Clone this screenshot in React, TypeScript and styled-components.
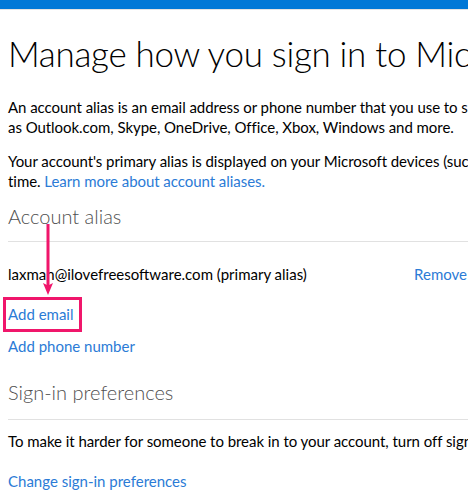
import styled, { createGlobalStyle } from "styled-components";

const GlobalStyle = createGlobalStyle`
  html, body {
    margin: 0;
    padding: 0;
    background: #fff;
    overflow: hidden;
  }
  body {
    font-family: "Segoe UI", Lato, "Liberation Sans", sans-serif;
    color: #000;
  }
`;

const TopBar = styled.div`
  height: 9px;
  background: #0078d7;
  border-bottom: 1px solid #e3e3e3;
`;

const Page = styled.main`
  width: 980px;
  padding: 0 8px;
`;

const Title = styled.h1`
  margin: 21px 0 0;
  font-size: 35px;
  line-height: 44px;
  font-weight: 300;
  letter-spacing: -0.3px;
  color: #000;
  white-space: nowrap;
`;

const Para = styled.p<{ $gap: number }>`
  margin: ${(p) => p.$gap}px 0 0;
  font-size: 15px;
  line-height: 20px;
  letter-spacing: -0.05px;
  white-space: nowrap;
`;

const Link = styled.a`
  color: #2b7bd6;
  text-decoration: none;
  font-size: 15px;
  line-height: 20px;
`;

const SectionTitle = styled.h2<{ $gap: number }>`
  margin: ${(p) => p.$gap}px 0 0;
  font-size: 20px;
  line-height: 28px;
  font-weight: 300;
  color: #505050;
`;

const Divider = styled.hr<{ $gap: number }>`
  margin: ${(p) => p.$gap}px 0 0;
  border: 0;
  border-top: 1px solid #e1e1e1;
  height: 0;
`;

const AliasRow = styled.div`
  width: 459px;
  margin-top: 22px;
  display: flex;
  justify-content: space-between;
  font-size: 15px;
  line-height: 20px;
`;

const ActionRow = styled.div<{ $gap: number }>`
  margin-top: ${(p) => p.$gap}px;
  line-height: 20px;
`;

const Highlight = styled.span`
  position: relative;
  display: inline-block;
`;

const Box = styled.span`
  position: absolute;
  top: -7px;
  left: -5px;
  right: -9px;
  bottom: -8px;
  border: 3px solid #f0166b;
  pointer-events: none;
`;

const Arrow = styled.svg`
  position: absolute;
  left: 35px;
  top: -80px;
  overflow: visible;
`;

export default function App() {
  return (
    <>
      <GlobalStyle />
      <TopBar />
      <Page>
        <Title>Manage how you sign in to Microsoft</Title>
        <Para $gap={22}>
          An account alias is an email address or phone number that you use to sign in to Microsoft services such
          <br />
          as Outlook.com, Skype, OneDrive, Office, Xbox, Windows and more.
        </Para>
        <Para $gap={14}>
          Your account's primary alias is displayed on your Microsoft devices (such as a Windows 10 PC, Xbox, or
          Windows Phone). You can change your primary alias at any
          <br />
          time. <Link href="#">Learn more about account aliases.</Link>
        </Para>

        <SectionTitle $gap={11}>Account alias</SectionTitle>
        <Divider $gap={11} />
        <AliasRow>
          <span>laxman@ilovefreesoftware.com (primary alias)</span>
          <Link href="#">Remove</Link>
        </AliasRow>
        <ActionRow $gap={20}>
          <Highlight>
            <Link href="#">Add email</Link>
            <Box />
            <Arrow width="12" height="71" viewBox="0 0 12 71">
              <rect x="3.5" y="0" width="3" height="62" fill="#f0166b" />
              <path d="M5 71 L0 59 L5 61.5 L10 59 Z" fill="#f0166b" />
            </Arrow>
          </Highlight>
        </ActionRow>
        <ActionRow $gap={12}>
          <Link href="#">Add phone number</Link>
        </ActionRow>

        <SectionTitle $gap={22}>Sign-in preferences</SectionTitle>
        <Divider $gap={13} />
        <Para $gap={11}>
          To make it harder for someone to break in to your account, turn off sign-in preferences for any email address
          or phone number you don't use.
        </Para>
        <ActionRow $gap={20}>
          <Link href="#">Change sign-in preferences</Link>
        </ActionRow>
      </Page>
    </>
  );
}
